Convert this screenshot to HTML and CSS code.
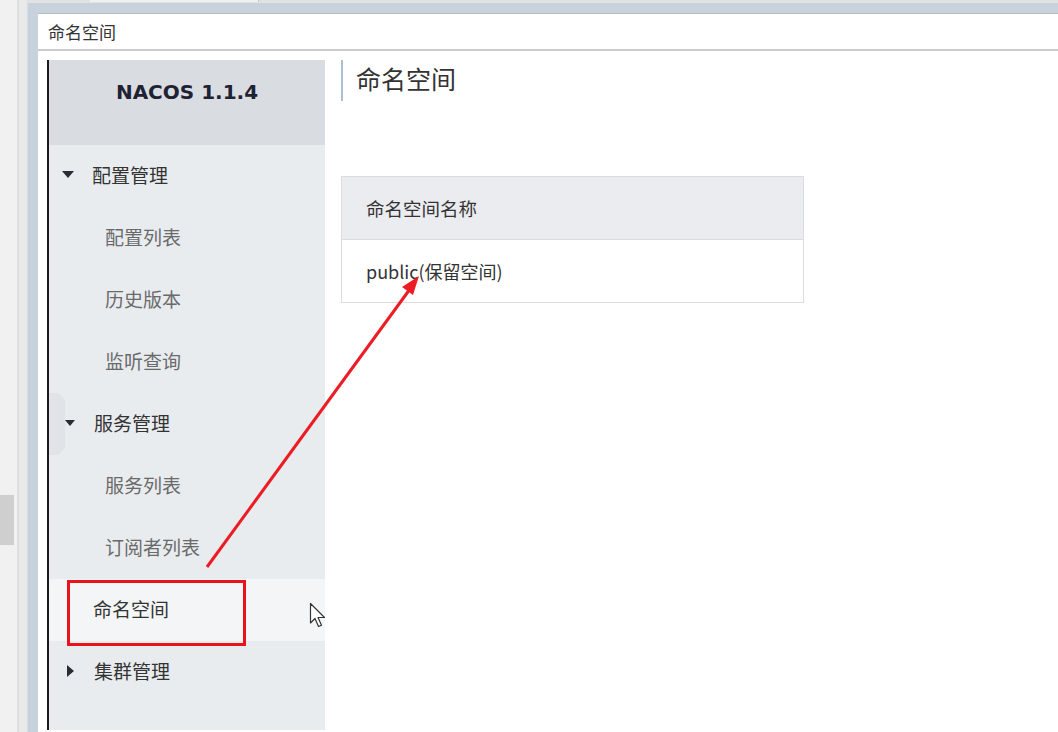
FILE: index.html
```html
<!DOCTYPE html>
<html lang="zh-CN">
<head>
<meta charset="utf-8">
<title>命名空间</title>
<link rel="stylesheet" href="styles.css">
</head>
<body>
<div class="app">
  <div class="desk">
    <div class="desk-main"><div class="desk-thumb"></div></div>
    <div class="desk-edge"></div>
  </div>
  <div class="frame">
    <div class="frame-top"><div class="frame-tab"></div></div>
    <div class="frame-inner">
      <div class="win">
        <div class="titlebar">命名空间</div>
        <div class="content">
          <aside class="sidebar">
            <div class="brand">NACOS 1.1.4</div>
            <ul class="menu">
              <li class="group"><span class="tri tri-down"></span>配置管理</li>
              <li class="sub">配置列表</li>
              <li class="sub">历史版本</li>
              <li class="sub">监听查询</li>
              <li class="group"><span class="tri tri-down small"></span>服务管理</li>
              <li class="sub">服务列表</li>
              <li class="sub">订阅者列表</li>
              <li class="item active">命名空间</li>
              <li class="group"><span class="tri tri-right"></span>集群管理</li>
            </ul>
            <div class="handle"></div>
          </aside>
          <main class="main">
            <h1 class="page-title">命名空间</h1>
            <table class="ns-table">
              <thead><tr><th>命名空间名称</th></tr></thead>
              <tbody><tr><td>public(保留空间)</td></tr></tbody>
            </table>
          </main>
        </div>
      </div>
    </div>
  </div>
</div>

<div class="redbox"></div>
<svg class="arrow" width="1058" height="732" viewBox="0 0 1058 732">
  <line x1="207" y1="567" x2="410" y2="289" stroke="#ec1c24" stroke-width="3"/>
  <polygon points="419,276 402,287 413,295" fill="#ec1c24"/>
</svg>
<svg class="cursor" width="20" height="28" viewBox="0 0 20 28">
  <path d="M1.5 1.5 L1.5 21 L6 16.5 L9.5 24.5 L12.5 23.2 L9 15.5 L15.5 15.5 Z" fill="#ffffff" stroke="#333" stroke-width="1.2" stroke-linejoin="round"/>
</svg>
</body>
</html>
```

FILE: styles.css
```css
html, body {
  margin: 0;
  padding: 0;
  width: 1058px;
  height: 732px;
  overflow: hidden;
  background: #f2f2f2;
  font-family: "Noto Sans CJK SC", "Noto Sans", sans-serif;
}

.app {
  display: flex;
  width: 1058px;
  height: 732px;
}

.desk {
  display: flex;
  width: 27px;
  flex: none;
}

.desk-main {
  width: 17px;
  background: #f1f1f1;
  padding-top: 495px;
}

.desk-thumb {
  width: 14px;
  height: 50px;
  background: #cfcfcf;
}

.desk-edge {
  width: 8px;
  background: #e9e9e9;
  border-left: 2px solid #dedede;
}

.frame {
  flex: 1;
  display: flex;
  flex-direction: column;
  background: #c8d2dd;
  border-left: 1px solid #d6dde5;
}

.frame-top {
  height: 3px;
  background: #e2e2e2;
  padding-left: 62px;
}

.frame-tab {
  width: 168px;
  height: 2px;
  background: #f0f0f0;
  border-right: 1px solid #c4c4c4;
}

.frame-inner {
  flex: 1;
  padding: 10px 0 0 10px;
  display: flex;
}

.win {
  flex: 1;
  background: #ffffff;
  display: flex;
  flex-direction: column;
  border-top: 1px solid #b4bcc6;
}

.titlebar {
  height: 35px;
  padding-left: 10px;
  display: flex;
  align-items: center;
  font-size: 17px;
  color: #333;
  border-bottom: 2px solid #cbcbcb;
}

.content {
  flex: 1;
  display: flex;
  padding: 9px 0 0 9px;
}

.sidebar {
  position: relative;
  width: 276px;
  height: 670px;
  flex: none;
  background: #e9ecef;
  border-left: 2px solid #1a1a1a;
}

.brand {
  height: 85px;
  background: #d9dde2;
  display: flex;
  align-items: center;
  justify-content: center;
  padding-bottom: 22px;
  box-sizing: border-box;
  font-family: "DejaVu Sans", sans-serif;
  font-weight: bold;
  font-size: 20px;
  color: #1e2233;
}

.menu {
  list-style: none;
  margin: 0;
  padding: 0;
}

.menu li {
  height: 62px;
  box-sizing: border-box;
  padding-bottom: 3px;
  display: flex;
  align-items: center;
  font-size: 19px;
  line-height: 1;
  color: #333;
}

.menu .group {
  padding-left: 13px;
}

.menu .sub {
  padding-left: 56px;
  color: #6a6a6a;
}

.menu .item {
  padding-left: 44px;
}

.menu .active {
  background: #f3f5f7;
}

.tri {
  display: inline-block;
  width: 0;
  height: 0;
  margin-right: 18px;
}

.tri-down {
  border-left: 6.5px solid transparent;
  border-right: 6.5px solid transparent;
  border-top: 7px solid #2b2b36;
}

.tri-down.small {
  border-left-width: 5px;
  border-right-width: 5px;
  border-top-width: 6px;
  margin-left: 3px;
  margin-right: 19px;
}

.tri-right {
  border-top: 6.5px solid transparent;
  border-bottom: 6.5px solid transparent;
  border-left: 7px solid #2b2b36;
  margin-left: 5px;
  margin-right: 20px;
}

.handle {
  position: absolute;
  left: 0;
  top: 333px;
  width: 16px;
  height: 62px;
  background: #e0e4e8;
  clip-path: polygon(0 0, 60% 0, 100% 12%, 100% 88%, 60% 100%, 0 100%);
}

.main {
  flex: 1;
  padding-left: 16px;
}

.page-title {
  margin: 0;
  height: 41px;
  border-left: 2px solid #a9c0d4;
  padding-left: 13px;
  display: flex;
  align-items: center;
  padding-bottom: 6px;
  box-sizing: border-box;
  font-size: 25px;
  font-weight: normal;
  color: #333;
}

.ns-table {
  margin-top: 75px;
  width: 463px;
  border-collapse: collapse;
  border: 1px solid #dcdcdc;
}

.ns-table th,
.ns-table td {
  height: 63px;
  padding: 0 0 0 24px;
  text-align: left;
  box-sizing: border-box;
  color: #333;
}

.ns-table th {
  background: #ebecf0;
  font-weight: normal;
  font-size: 18.5px;
  border-bottom: 1px solid #dcdcdc;
}

.ns-table td {
  font-size: 18px;
  background: #fff;
}

.redbox {
  position: absolute;
  left: 67px;
  top: 580px;
  width: 173px;
  height: 60px;
  border: 3px solid #e8141c;
}

.arrow {
  position: absolute;
  left: 0;
  top: 0;
  pointer-events: none;
}

.cursor {
  position: absolute;
  left: 309px;
  top: 602px;
}
```
